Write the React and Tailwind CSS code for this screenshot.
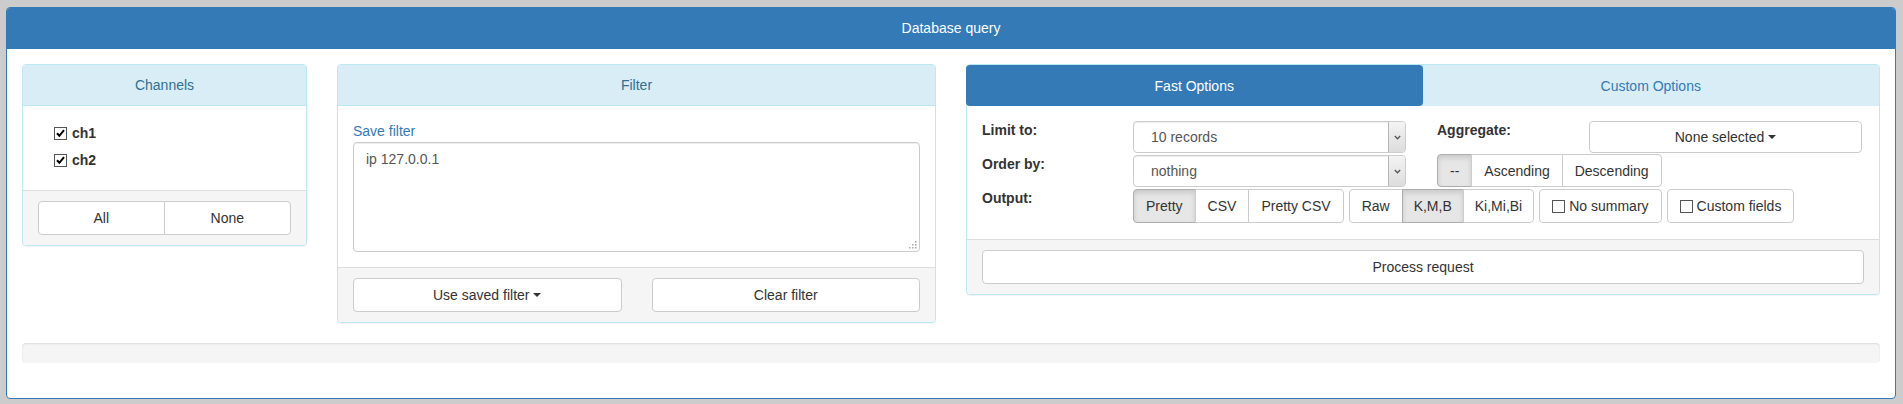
import React from "react";

function Caret() {
  return (
    <span className="inline-block w-0 h-0 ml-[4px] border-t-[4px] border-t-[#333] border-x-[4px] border-x-transparent align-middle" />
  );
}

function Btn({ children, active, className = "", h = "h-[34px]", px = "px-[12px]" }) {
  return (
    <div
      className={
        h +
        " " +
        px +
        " flex items-center justify-center border whitespace-nowrap " +
        (active
          ? "bg-[#e6e6e6] border-[#adadad] shadow-[inset_0_3px_5px_rgba(0,0,0,0.125)] "
          : "bg-white border-[#ccc] ") +
        className
      }
    >
      {children}
    </div>
  );
}

function Group({ items, className = "", h = "h-[34px]" }) {
  return (
    <div className={"flex " + className}>
      {items.map((it, i) => (
        <Btn
          key={i}
          h={h}
          px={it.px || "px-[12px]"}
          active={it.active}
          className={
            (i === 0 ? "rounded-l-[4px] " : "-ml-px ") +
            (i === items.length - 1 ? "rounded-r-[4px]" : "")
          }
        >
          {it.label}
        </Btn>
      ))}
    </div>
  );
}

function Checked() {
  return (
    <svg width="13" height="13" viewBox="0 0 13 13" className="shrink-0">
      <rect x="0.5" y="0.5" width="12" height="12" fill="#fff" stroke="#555" />
      <path d="M3 6.2 L5.4 8.8 L10 3.2" stroke="#000" strokeWidth="2" fill="none" />
    </svg>
  );
}

function Unchecked() {
  return (
    <svg width="13" height="13" viewBox="0 0 13 13" className="shrink-0">
      <rect x="0.5" y="0.5" width="12" height="12" fill="#fff" stroke="#555" />
    </svg>
  );
}

function Select({ value }) {
  return (
    <div className="w-[273px] h-[32px] flex items-stretch border border-[#ccc] rounded-[4px] bg-white shadow-[inset_0_1px_1px_rgba(0,0,0,0.075)]">
      <div className="flex-1 flex items-center pl-[17px] text-[#555]">{value}</div>
      <div className="w-[17px] flex items-center justify-center border-l border-[#b5b5b5] rounded-r-[3px] bg-gradient-to-b from-[#f4f4f4] to-[#dcdcdc]">
        <svg width="7" height="5" viewBox="0 0 7 5">
          <path d="M0.8 1 L3.5 3.8 L6.2 1" stroke="#555" strokeWidth="1.3" fill="none" />
        </svg>
      </div>
    </div>
  );
}

function InfoPanel({ title, children, footer, className = "" }) {
  return (
    <div className={"border border-[#bce8f1] rounded-[4px] bg-white shadow-[0_1px_1px_rgba(0,0,0,0.05)] " + className}>
      <div className="h-[41px] bg-[#d9edf7] border-b border-[#bce8f1] rounded-t-[3px] flex items-center justify-center text-[#31708f]">
        {title}
      </div>
      {children}
      {footer && (
        <div className="bg-[#f5f5f5] border-t border-[#ddd] rounded-b-[3px] px-[15px] py-[10px]">
          {footer}
        </div>
      )}
    </div>
  );
}

export default function App() {
  return (
    <div className="bg-[#cccccc] pt-[7px] pl-[6px] pr-[7px] pb-[5px] font-['Liberation_Sans',Arial,sans-serif] text-[14px] leading-[20px] text-[#333]">
      <div className="border border-[#337ab7] rounded-[4px] bg-white">
        <div className="h-[41px] bg-[#337ab7] border-b border-[#337ab7] rounded-t-[3px] flex items-center justify-center text-white">
          Database query
        </div>
        <div className="p-[15px]">
          <div className="grid grid-cols-[285px_599px_914px] gap-x-[30px] items-start mb-[20px]">
            {/* Channels */}
            <InfoPanel
              title="Channels"
              footer={
                <div className="grid grid-cols-2">
                  <Btn className="rounded-l-[4px]">All</Btn>
                  <Btn className="-ml-px rounded-r-[4px]">None</Btn>
                </div>
              }
            >
              <div className="pt-[17px] pb-[20px] pl-[31px] flex flex-col gap-[7px]">
                <div className="h-[20px] flex items-center gap-[5px] font-bold">
                  <Checked />
                  <span>ch1</span>
                </div>
                <div className="h-[20px] flex items-center gap-[5px] font-bold">
                  <Checked />
                  <span>ch2</span>
                </div>
              </div>
            </InfoPanel>

            {/* Filter */}
            <InfoPanel
              title="Filter"
              footer={
                <div className="grid grid-cols-2 gap-x-[30px]">
                  <Btn className="rounded-[4px]">
                    Use saved filter
                    <Caret />
                  </Btn>
                  <Btn className="rounded-[4px]">Clear filter</Btn>
                </div>
              }
            >
              <div className="p-[15px]">
                <div className="h-[21px] text-[#337ab7]">Save filter</div>
                <div className="relative h-[110px] border border-[#ccc] rounded-[4px] shadow-[inset_0_1px_1px_rgba(0,0,0,0.075)] px-[12px] py-[6px] text-[#555]">
                  ip 127.0.0.1
                  <svg width="8" height="8" viewBox="0 0 8 8" className="absolute right-[2px] bottom-[2px]">
                    <rect x="6" y="0" width="1.5" height="1.5" fill="#aaa" />
                    <rect x="3" y="3" width="1.5" height="1.5" fill="#aaa" />
                    <rect x="6" y="3" width="1.5" height="1.5" fill="#aaa" />
                    <rect x="0" y="6" width="1.5" height="1.5" fill="#aaa" />
                    <rect x="3" y="6" width="1.5" height="1.5" fill="#aaa" />
                    <rect x="6" y="6" width="1.5" height="1.5" fill="#aaa" />
                  </svg>
                </div>
              </div>
            </InfoPanel>

            {/* Options */}
            <div className="border border-[#bce8f1] rounded-[4px] bg-white shadow-[0_1px_1px_rgba(0,0,0,0.05)]">
              <div className="flex bg-[#d9edf7] rounded-t-[3px]">
                <div className="flex-1 h-[41px] flex items-center justify-center bg-[#337ab7] text-white rounded-[4px] -ml-px">
                  Fast Options
                </div>
                <div className="flex-1 h-[41px] flex items-center justify-center text-[#337ab7]">
                  Custom Options
                </div>
              </div>
              <div className="px-[15px] pt-[15px] pb-[16px] flex flex-col gap-[2px]">
                <div className="flex items-start h-[32px]">
                  <div className="w-[151px] font-bold -mt-px">Limit to:</div>
                  <Select value="10 records" />
                  <div className="ml-[31px] w-[152px] font-bold -mt-px">Aggregate:</div>
                  <Btn h="h-[32px]" className="w-[273px] rounded-[4px]">
                    None selected
                    <Caret />
                  </Btn>
                </div>
                <div className="flex items-start h-[32px]">
                  <div className="w-[151px] font-bold -mt-px">Order by:</div>
                  <Select value="nothing" />
                  <Group
                    h="h-[33px]"
                    className="ml-[31px] -mt-px"
                    items={[
                      { label: "--", active: true },
                      { label: "Ascending" },
                      { label: "Descending" },
                    ]}
                  />
                </div>
                <div className="flex items-start h-[34px]">
                  <div className="w-[151px] font-bold -mt-px">Output:</div>
                  <div className="flex gap-[5px]">
                    <Group
                      items={[
                        { label: "Pretty", active: true },
                        { label: "CSV" },
                        { label: "Pretty CSV" },
                      ]}
                    />
                    <Group
                      items={[
                        { label: "Raw" },
                        { label: "K,M,B", active: true, px: "px-[11px]" },
                        { label: "Ki,Mi,Bi", px: "px-[11px]" },
                      ]}
                    />
                    <Btn className="rounded-[4px] gap-[4px]">
                      <Unchecked />
                      No summary
                    </Btn>
                    <Btn className="rounded-[4px] gap-[4px]">
                      <Unchecked />
                      Custom fields
                    </Btn>
                  </div>
                </div>
              </div>
              <div className="bg-[#f5f5f5] border-t border-[#ddd] rounded-b-[3px] px-[15px] py-[10px]">
                <Btn className="rounded-[4px]">Process request</Btn>
              </div>
            </div>
          </div>
          <div className="h-[20px] mb-[20px] bg-[#f5f5f5] rounded-[4px] shadow-[inset_0_1px_2px_rgba(0,0,0,0.1)]" />
        </div>
      </div>
    </div>
  );
}
